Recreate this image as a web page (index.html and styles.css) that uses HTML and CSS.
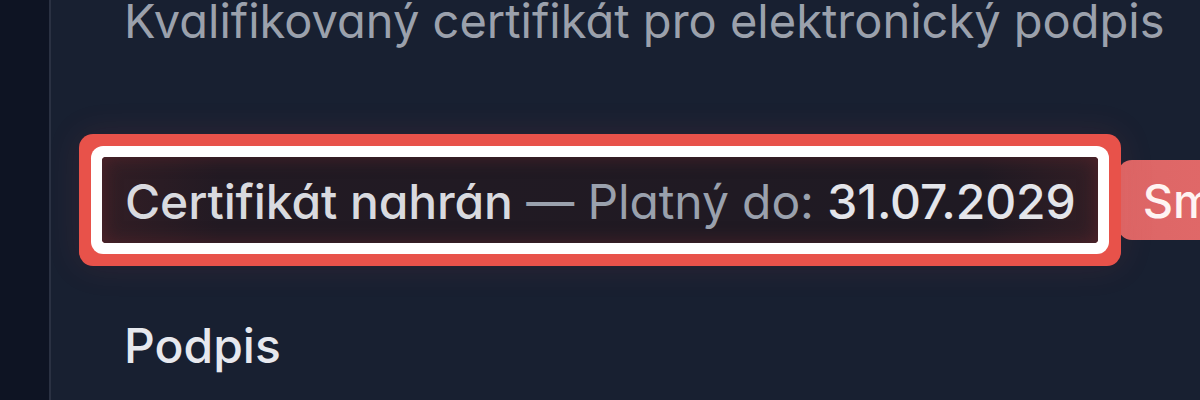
FILE: index.html
```html
<!DOCTYPE html>
<html lang="cs">
<head>
<meta charset="utf-8">
<title>Certifikát</title>
<link rel="stylesheet" href="styles.css">
</head>
<body>
<div class="layout">
  <aside class="sidebar"></aside>
  <main class="content">
    <p class="subtitle">Kvalifikovaný certifikát pro elektronický podpis</p>
    <div class="status-row">
      <div class="status-box">
        <span class="status-strong">Certifikát nahrán</span>
        <span class="status-muted">— Platný do:</span>
        <span class="status-date">31.07.2029</span>
      </div>
      <button class="btn-delete" type="button">Smazat certifikát</button>
    </div>
    <h2 class="section-title">Podpis</h2>
  </main>
</div>
</body>
</html>
```
FILE: styles.css
```css
html, body {
  margin: 0;
  padding: 0;
  height: 100%;
  overflow: hidden;
  background: #182031;
}

body {
  font-family: Inter, "Noto Sans", "DejaVu Sans", sans-serif;
  font-feature-settings: "cv11" 1, "ss01" 0;
}

.layout {
  display: flex;
  height: 400px;
  overflow: hidden;
}

.sidebar {
  width: 49px;
  flex: 0 0 49px;
  background: #0e1423;
  border-right: 2px solid #2a3142;
}

.content {
  flex: 1;
  min-width: 0;
  padding-left: 73px;
  white-space: nowrap;
  overflow: hidden;
}

.subtitle {
  margin: -9px 0 0;
  font-size: 47px;
  line-height: 60px;
  color: #9ba1ac;
  font-weight: 400;
}

.status-row {
  display: flex;
  align-items: center;
  gap: 20px;
  margin: 106px 0 0 -22px;
}

.status-box {
  position: relative;
  z-index: 1;
  flex: 0 0 auto;
  padding: 17px 22px 13px 23px;
  font-size: 48px;
  line-height: 56px;
  letter-spacing: -0.12px;
  border-radius: 4px;
  background: linear-gradient(90deg, #321e25 0%, #221a23 12%, #1f1a23 88%, #321e25 100%);
  box-shadow:
    inset 0 0 18px rgba(110, 40, 45, 0.55),
    0 0 0 11px #ffffff,
    0 0 0 23px #e8524a,
    0 0 34px 24px rgba(232, 82, 74, 0.10);
}

.status-strong {
  font-weight: 500;
  color: #d9dadf;
}

.status-muted {
  font-weight: 400;
  color: #9aa1ad;
}

.status-date {
  font-weight: 500;
  color: #e4e5ea;
}

.btn-delete {
  flex: 0 0 auto;
  height: 80px;
  padding: 0 28px 0 25px;
  border: none;
  border-radius: 14px;
  font-family: inherit;
  font-size: 47px;
  font-weight: 500;
  color: #fff4f2;
  background: linear-gradient(90deg, #dc6666 0%, #ef7070 100%);
}

.section-title {
  margin: 75px 0 0;
  font-size: 48px;
  line-height: 56px;
  font-weight: 500;
  color: #e6e8ee;
}
```
